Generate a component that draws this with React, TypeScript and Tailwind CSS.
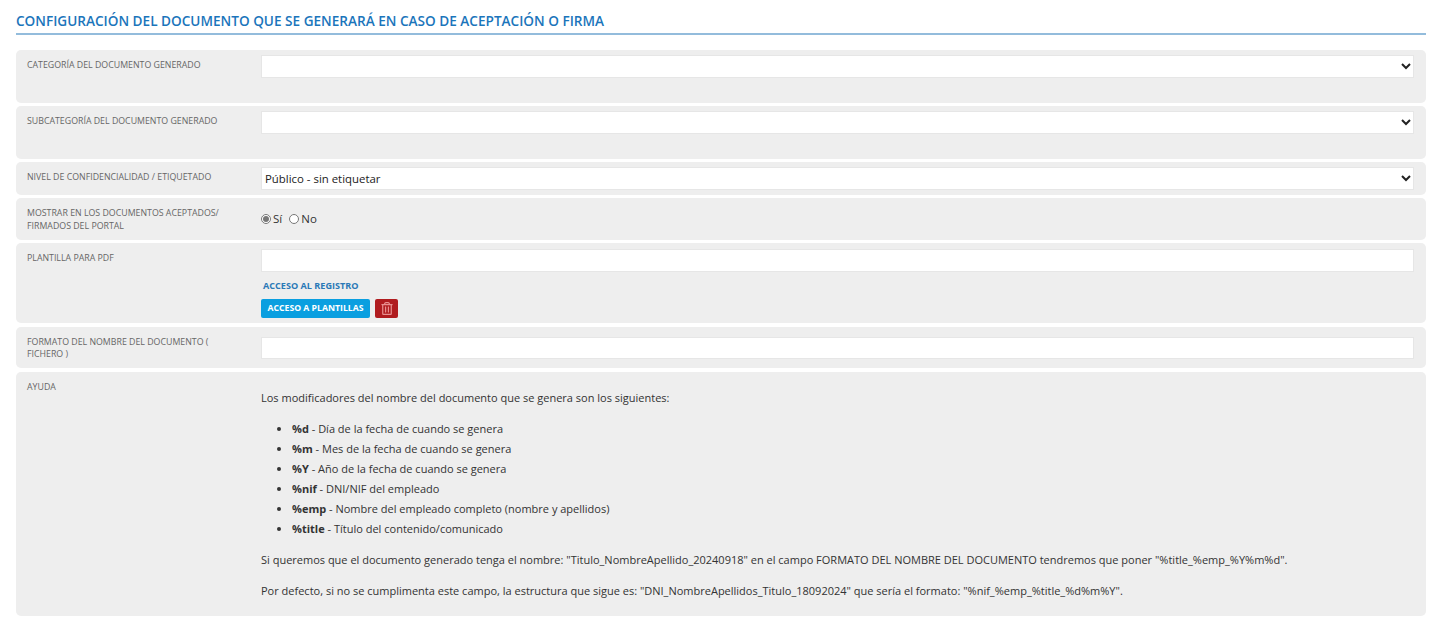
import { FC, ReactNode } from 'react';
import { FaRegTrashAlt } from 'react-icons/fa';

interface IRowProps {
  label: ReactNode;
  className?: string;
  children: ReactNode;
}

const Row: FC<IRowProps> = ({ label, className, children }) => (
  <div className={`flex rounded-[5px] bg-[#eeeeee] py-[5px] pl-[11px] pr-3 ${className ?? ''}`}>
    <div className="w-[234px] shrink-0 pr-4 pt-[4px] text-[8.8px] uppercase leading-[12.5px] text-[#666]">
      {label}
    </div>
    <div className="min-w-0 flex-1">{children}</div>
  </div>
);

const fieldClass =
  'block h-[22.7px] w-full rounded-none border border-[#e6e6e6] bg-white px-0 text-[#333] outline-none';

// no real border here, so the option text starts 1px further left
const selectClass =
  'block h-[22.7px] w-full rounded-none bg-white px-0 text-[11.4px] text-[#222] shadow-[inset_0_0_0_1px_#e6e6e6] outline-none';

const helpItems = [
  ['%d', 'Día de la fecha de cuando se genera'],
  ['%m', 'Mes de la fecha de cuando se genera'],
  ['%Y', 'Año de la fecha de cuando se genera'],
  ['%nif', 'DNI/NIF del empleado'],
  ['%emp', 'Nombre del empleado completo (nombre y apellidos)'],
  ['%title', 'Título del contenido/comunicado'],
];

const App: FC = () => {
  return (
    <div className="min-h-[622px] bg-white pl-4 pr-[14px] pt-[11px] font-['Open_Sans',sans-serif] text-[11px] text-[#333]">
      <h2 className="border-b-2 border-[#93bcdc] pb-[3px] text-[13.6px] font-semibold uppercase leading-[19px] text-[#1b75bb]">
        Configuración del documento que se generará en caso de aceptación o firma
      </h2>
      <div className="mt-[15px] flex flex-col gap-[3.4px]">
        <Row label="Categoría del documento generado" className="h-[52.7px]">
          <select className={selectClass} defaultValue="">
            <option value=""></option>
          </select>
        </Row>
        <Row label="Subcategoría del documento generado" className="h-[52.7px]">
          <select className={selectClass} defaultValue="">
            <option value=""></option>
          </select>
        </Row>
        <Row label="Nivel de confidencialidad / etiquetado" className="h-[32.7px]">
          <select className={selectClass} defaultValue="publico">
            <option value="publico">Público - sin etiquetar</option>
          </select>
        </Row>
        <Row label="Mostrar en los documentos aceptados/ firmados del portal" className="h-[41.7px]">
          <div className="flex h-[31px] items-center text-[11.5px]">
            <label className="flex items-center">
              <input type="radio" name="show" defaultChecked className="m-0 h-[10px] w-[10px] accent-[#777]" />
              <span className="ml-[2px]">Sí</span>
            </label>
            <label className="ml-[7px] flex items-center">
              <input type="radio" name="show" className="m-0 h-[10px] w-[10px] accent-[#777]" />
              <span className="ml-[2px]">No</span>
            </label>
          </div>
        </Row>
        <Row label="Plantilla para PDF" className="h-[80px]">
          <input type="text" className={`${fieldClass} mt-px`} />
          <a className="ml-[2px] mt-[7px] block text-[9.1px] font-bold uppercase leading-[13px] text-[#2a79b7]">
            Acceso al registro
          </a>
          <div className="mt-[7px] flex gap-[5px]">
            <button className="h-[19px] w-[109px] rounded-[2px] bg-[#0a9fe0] text-[8.7px] font-bold uppercase text-white">
              Acceso a plantillas
            </button>
            <button className="flex h-[19px] w-[23px] items-center justify-center rounded-[2px] bg-[#b01c1f] text-[#e88f8f]">
              <FaRegTrashAlt className="h-[13px] w-[12px]" />
            </button>
          </div>
        </Row>
        <Row label="Formato del nombre del documento ( fichero )" className="h-[41.7px]">
          <input type="text" className={`${fieldClass} mt-[5px]`} />
        </Row>
        <Row label="Ayuda" className="h-[244.5px]">
          <div className="pt-[11.4px] leading-[19.9px]">
            <p>Los modificadores del nombre del documento que se genera son los siguientes:</p>
            <ul className="ml-[31px] mt-[11px] list-disc">
              {helpItems.map(([code, text]) => (
                <li key={code}>
                  <b>{code}</b> - {text}
                </li>
              ))}
            </ul>
            <p className="mt-[11.5px]">
              Si queremos que el documento generado tenga el nombre: "Titulo_NombreApellido_20240918" en el campo FORMATO DEL NOMBRE DEL DOCUMENTO tendremos que poner "%title_%emp_%Y%m%d".
            </p>
            <p className="mt-[11px]">
              Por defecto, si no se cumplimenta este campo, la estructura que sigue es: "DNI_NombreApellidos_Titulo_18092024" que sería el formato: "%nif_%emp_%title_%d%m%Y".
            </p>
          </div>
        </Row>
      </div>
    </div>
  );
};

export default App;
